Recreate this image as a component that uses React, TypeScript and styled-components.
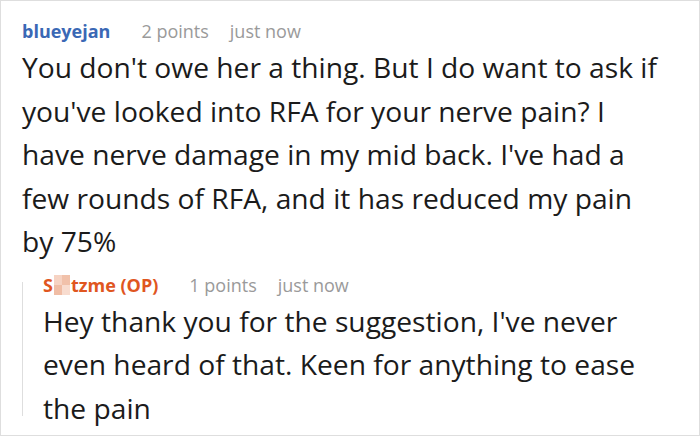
import styled, { createGlobalStyle } from "styled-components";

const GlobalStyle = createGlobalStyle`
  html, body {
    margin: 0;
    padding: 0;
    background: #ffffff;
  }
`;

const Card = styled.div`
  box-sizing: border-box;
  width: 700px;
  height: 436px;
  border: 1px solid #dedede;
  background: #fff;
  padding: 18px 38px 0 21px;
  overflow: hidden;
`;

const Meta = styled.div`
  display: flex;
  align-items: baseline;
  height: 24px;
  font-family: "Open Sans", "Noto Sans", sans-serif;
  font-size: 18px;
  line-height: 24px;
  white-space: nowrap;
`;

const Author = styled.span<{ op?: boolean }>`
  display: inline-flex;
  align-items: baseline;
  font-weight: 700;
  color: ${(p) => (p.op ? "#e0561f" : "#3a68b5")};
  margin-right: 31px;
`;

const Points = styled.span`
  color: #9a9a9a;
  margin-right: 21px;
`;

const Time = styled.span`
  color: #9a9a9a;
`;

const Body = styled.p`
  margin: 3px 0 0;
  font-family: "Open Sans", "Noto Sans", sans-serif;
  font-size: 28.2px;
  line-height: 43.5px;
  color: #1b1b1b;
`;

const Reply = styled.div`
  position: relative;
  margin-top: 9px;
  padding-left: 21px;

  &::before {
    content: "";
    position: absolute;
    left: 0;
    top: 9px;
    bottom: 14px;
    width: 1px;
    background: #dedede;
  }
`;

const Redacted = styled.span`
  display: inline-flex;
  flex-direction: column;
  align-self: center;
  width: 16px;
  height: 20px;
  margin: 0 1px;
`;

const RedactRow = styled.span`
  display: flex;
  flex: 1;
`;

const RedactCell = styled.span<{ shade: string }>`
  flex: 1;
  background: ${(p) => p.shade};
`;

function Blur() {
  return (
    <Redacted>
      <RedactRow>
        <RedactCell shade="#f6d3c3" />
        <RedactCell shade="#f1c1aa" />
      </RedactRow>
      <RedactRow>
        <RedactCell shade="#f0bda5" />
        <RedactCell shade="#f8dccf" />
      </RedactRow>
    </Redacted>
  );
}

function App() {
  return (
    <>
      <GlobalStyle />
      <Card>
        <Meta>
          <Author>blueyejan</Author>
          <Points>2 points</Points>
          <Time>just now</Time>
        </Meta>
        <Body>
          You don't owe her a thing. But I do want to ask if you've looked into RFA for
          your nerve pain? I have nerve damage in my mid back. I've had a few rounds of
          RFA, and it has reduced my pain by 75%
        </Body>
        <Reply>
          <Meta>
            <Author op>
              S<Blur />tzme (OP)
            </Author>
            <Points>1 points</Points>
            <Time>just now</Time>
          </Meta>
          <Body>
            Hey thank you for the suggestion, I've never even heard of that. Keen for
            anything to ease the pain
          </Body>
        </Reply>
      </Card>
    </>
  );
}

export default App;
